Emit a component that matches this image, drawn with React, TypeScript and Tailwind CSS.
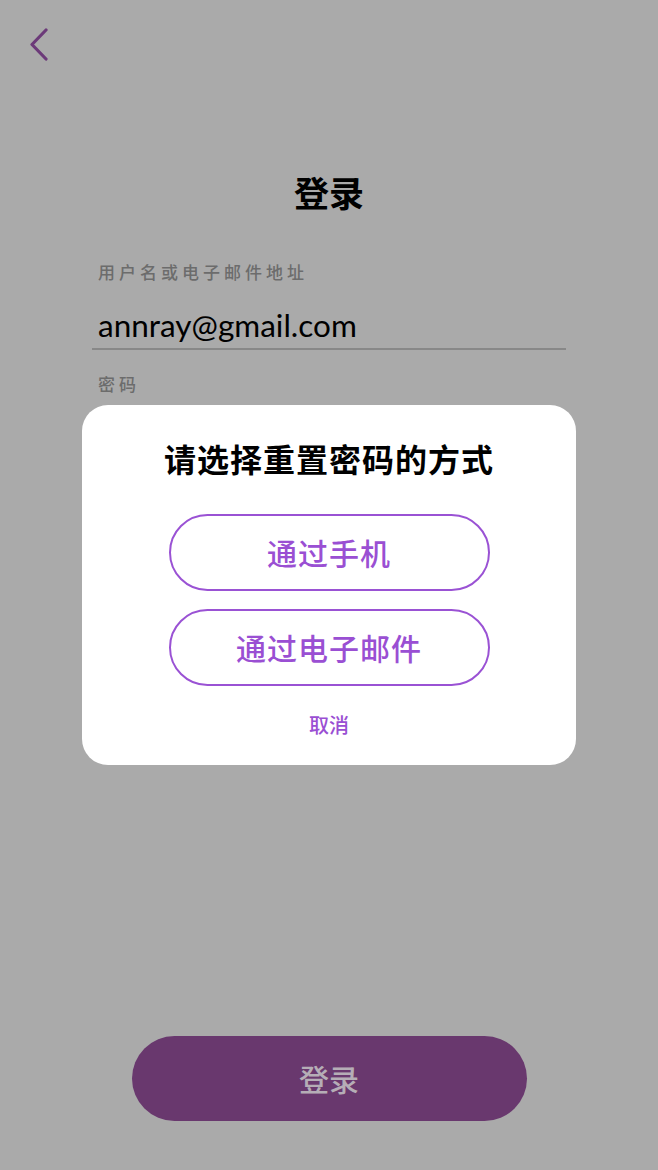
import React from "react";

const CJK = '"Noto Sans CJK SC", "Noto Sans", sans-serif';

export default function App() {
  return (
    <div
      className="relative w-full h-[1170px] bg-[#aaaaaa] overflow-hidden"
      style={{ fontFamily: CJK }}
    >
      <div className="flex flex-col">
        <div className="pt-[28px] pl-[28px] h-[64px]">
          <svg width="22" height="34" viewBox="0 0 22 34" fill="none">
            <path
              d="M18 2 L4 16.5 L18 31"
              stroke="#6c3a79"
              strokeWidth="3.2"
              strokeLinecap="round"
              strokeLinejoin="round"
            />
          </svg>
        </div>
        <div className="mt-[108px] h-[40px] flex items-center justify-center text-[35px] font-bold text-black leading-[40px]">
          登录
        </div>
        <div className="mt-[48px] pl-[98px] h-[24px] text-[17px] leading-[24px] font-medium tracking-[4px] text-[#6c6c6c]">
          用户名或电子邮件地址
        </div>
        <div
          className="mt-[23px] pl-[98px] h-[36px] text-[31.5px] leading-[36px] text-black"
          style={{ fontFamily: '"Lato", "Noto Sans", sans-serif' }}
        >
          annray@gmail.com
        </div>
        <div className="mt-[5px] mx-[92px] h-[2px] bg-[#888888]" />
        <div className="mt-[22px] pl-[98px] h-[24px] text-[17px] leading-[24px] font-medium tracking-[4px] text-[#6c6c6c]">
          密码
        </div>
        <div className="mt-[640px] flex justify-center">
          <div className="w-[395px] h-[85px] rounded-full bg-[#69386e] flex items-center justify-center text-[30px] font-medium text-[#b5adb6]">
            登录
          </div>
        </div>
      </div>

      <div className="absolute left-[82px] top-[405px] w-[494px] h-[360px] bg-white rounded-[26px] flex flex-col items-center">
        <div className="mt-[33px] h-[40px] leading-[40px] text-[32px] font-bold text-black tracking-[1px]">
          请选择重置密码的方式
        </div>
        <div className="mt-[36px] w-[321px] h-[77px] rounded-full border-2 border-[#9a52d4] flex items-center justify-center text-[30px] font-medium text-[#9a4fd3] tracking-[1px]">
          通过手机
        </div>
        <div className="mt-[18px] w-[321px] h-[77px] rounded-full border-2 border-[#9a52d4] flex items-center justify-center text-[30px] font-medium text-[#9a4fd3] tracking-[1px]">
          通过电子邮件
        </div>
        <div className="mt-[24px] h-[30px] leading-[30px] text-[20px] font-medium text-[#9a4fd3]">
          取消
        </div>
      </div>
    </div>
  );
}
